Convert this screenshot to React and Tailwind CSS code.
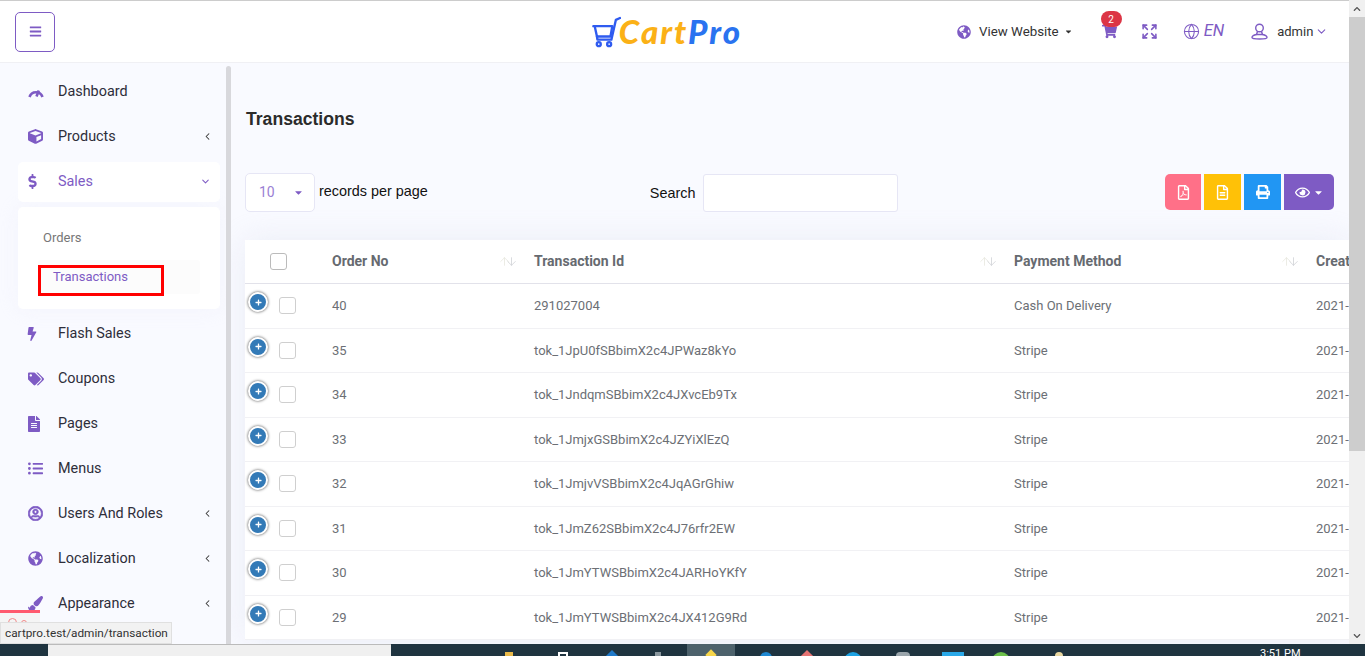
import {
  FaCube, FaDollarSign, FaBolt, FaTags, FaFileAlt, FaListUl, FaRegUserCircle,
  FaGlobeAmericas, FaPaintBrush, FaShoppingCart, FaPrint, FaRegEye, FaRegFilePdf, FaRegFileAlt,
  FaBars, FaChevronDown, FaChevronUp, FaCaretDown, FaPlus,
} from 'react-icons/fa';
import { Globe, Expand, ChevronDown, ChevronLeft, ArrowUp, ArrowDown } from 'lucide-react';

function GaugeIcon() {
  return (
    <svg width="16" height="15" viewBox="0 0 16 15" fill="none" stroke="currentColor" strokeWidth="2.6">
      <path d="M1.5 13A6.8 6.800 0 0 1 14.500 13" />
      <path d="M8.500 12.500L10.800 6.500" />
    </svg>
  );
}

const menu = [
  { label: 'Dashboard', icon: <GaugeIcon /> },
  { label: 'Products', icon: <FaCube size={15} />, arrow: true },
  { label: 'Sales', icon: <FaDollarSign size={15} className="-ml-[3px]" />, open: true },
  { label: 'Flash Sales', icon: <FaBolt size={14} className="-ml-[3px]" /> },
  { label: 'Coupons', icon: <FaTags size={16} /> },
  { label: 'Pages', icon: <FaFileAlt size={16} className="-ml-[2px]" /> },
  { label: 'Menus', icon: <FaListUl size={15} /> },
  { label: 'Users And Roles', icon: <FaRegUserCircle size={15} stroke="currentColor" strokeWidth={24} />, arrow: true },
  { label: 'Localization', icon: <FaGlobeAmericas size={15} />, arrow: true },
  { label: 'Appearance', icon: <FaPaintBrush size={15} />, arrow: true },
];

const rows = [
  ['40', '291027004', 'Cash On Delivery'],
  ['35', 'tok_1JpU0fSBbimX2c4JPWaz8kYo', 'Stripe'],
  ['34', 'tok_1JndqmSBbimX2c4JXvcEb9Tx', 'Stripe'],
  ['33', 'tok_1JmjxGSBbimX2c4JZYiXlEzQ', 'Stripe'],
  ['32', 'tok_1JmjvVSBbimX2c4JqAGrGhiw', 'Stripe'],
  ['31', 'tok_1JmZ62SBbimX2c4J76rfr2EW', 'Stripe'],
  ['30', 'tok_1JmYTWSBbimX2c4JARHoYKfY', 'Stripe'],
  ['29', 'tok_1JmYTWSBbimX2c4JX412G9Rd', 'Stripe'],
];

function CartLogo() {
  return (
    <svg width="32" height="34" viewBox="0 0 32 34" fill="none" stroke="#2f5bf0" strokeWidth="2.6" strokeLinecap="round" strokeLinejoin="round">
      <path d="M1.5 10.5h21l-2 11.5H5.5L3 10.5" />
      <path d="M5.5 22l.5 3.5h15.5L26.5 3.5 31 1.5" />
      <circle cx="7.5" cy="30.5" r="2.2" />
      <circle cx="19" cy="30.5" r="2.2" />
    </svg>
  );
}

function AdminIcon() {
  return (
    <svg width="17" height="17" viewBox="0 0 17 17" fill="none" stroke="currentColor" strokeWidth="1.4" strokeLinejoin="round" className="ml-[27px] text-[#7e5bc4]">
      <circle cx="8.5" cy="5" r="3.8" />
      <path d="M6.5 8.5L5.5 11.5h6L10.5 8.5" />
      <path d="M5.5 11.5C3 12 1 13 1 14.5c0 1 1.5 1.5 7.5 1.5s7.5-.5 7.5-1.5c0-1.500-2-2.500-4.500-3" />
    </svg>
  );
}

function SortArrows() {
  return (
    <span className="flex">
      <ArrowUp size={13} strokeWidth={1.4} className="-mr-[3px] text-[#e6e6dc]" />
      <ArrowDown size={13} strokeWidth={1.4} className="-ml-[3px] text-[#cdd0d4]" />
    </span>
  );
}

function Check({ className = '' }) {
  return <span className={`block w-[17px] h-[17px] rounded-[3px] border border-[#cfcfcf] bg-white ${className}`} />;
}

function MenuRow({ item }) {
  return (
    <div className="h-[45px] flex items-center pl-[18px] pr-[6px]">
      <div className={`flex-1 flex items-center h-[40px] rounded-[5px] pl-[10px] pr-[10px] ${item.open ? 'bg-white text-[#7e5bc4]' : 'text-[#2e2e3a]'}`}>
        <span className="w-[30px] flex text-[#7e5bc4]">{item.icon}</span>
        <span className="flex-1 text-[14.4px]">{item.label}</span>
        {item.arrow && <ChevronLeft size={11} strokeWidth={2.2} className="-mr-[3px] text-[#333]" />}
        {item.open && <ChevronDown size={11} strokeWidth={2.2} className="-mr-[1px] text-[#7e5bc4]" />}
      </div>
    </div>
  );
}

export default function App() {
  return (
    <div className="relative w-[1365px] h-[656px] overflow-hidden bg-white font-['Roboto',sans-serif]">
      <div className="flex h-[644px]">
        <div className="w-[1349px] flex flex-col bg-[#f9faff]">
          {/* Top bar */}
          <header className="h-[63px] shrink-0 flex items-center pl-[15px] bg-white border-t border-t-[#cccccc] border-b border-b-[#f0f0f4]">
            <button className="w-[40px] h-[40px] rounded-[5px] border border-[#7e5bc4] flex items-center justify-center text-[#7e5bc4]">
              <FaBars size={13} />
            </button>
            <div className="ml-[537px] w-[150px] flex items-center">
              <CartLogo />
              <span className="-ml-[2px] text-[33px] font-black italic tracking-[2px] leading-none font-['Lato',sans-serif]">
                <span className="text-[#fbb117]">Cart</span>
                <span className="text-[#2a73f0]">Pro</span>
              </span>
            </div>
            <div className="ml-[215px] flex items-center text-[#333]">
              <FaGlobeAmericas size={14} className="text-[#7e5bc4]" />
              <span className="ml-[8px] text-[13.3px]">View Website</span>
              <FaCaretDown size={9} className="ml-[5px]" />
              <span className="relative ml-[29px] text-[#7e5bc4]">
                <FaShoppingCart size={15} />
                <span className="absolute -top-[13px] -left-[1px] w-[21px] h-[16px] rounded-full bg-[#dc3545] text-white text-[10px] flex items-center justify-center">2</span>
              </span>
              <Expand size={17} strokeWidth={2.2} className="ml-[24px] text-[#7e5bc4]" />
              <Globe size={17} strokeWidth={1.5} className="ml-[25px] text-[#7e5bc4]" />
              <span className="ml-[4px] text-[16.5px] italic text-[#7e5bc4]">EN</span>
              <AdminIcon />
              <span className="ml-[9px] text-[13px]">admin</span>
              <ChevronDown size={13} className="ml-[2px] text-[#7e5bc4]" />
            </div>
          </header>

          <div className="flex-1 min-h-0 flex">
            {/* Sidebar */}
            <aside className="w-[226px] shrink-0 pt-[6px] overflow-hidden">
              {menu.map((item) => (
                <div key={item.label}>
                  <MenuRow item={item} />
                  {item.open && (
                    <div className="ml-[18px] mr-[6px] mt-[2.5px] mb-[2.5px] h-[102px] rounded-[5px] bg-white pt-[22px] px-[20px] shadow-[0_0_20px_rgba(240,240,250,0.6)]">
                      <div className="pl-[5px] text-[13px] leading-[17px] text-[#777]">Orders</div>
                      <div className="mt-[14px] h-[34px] rounded-[3px] bg-[#fcfcfc] pl-[15px] pt-[8px] text-[13px] leading-[17px] text-[#7e5bc4]">Transactions</div>
                    </div>
                  )}
                </div>
              ))}
            </aside>
            <div className="w-[5px] shrink-0 mt-[3px] rounded-t-[3px] bg-[#d8d8dc]" />

            {/* Content */}
            <main className="flex-1 min-w-0 pl-[14px] pt-[45px] overflow-hidden">
              <h1 className="pl-[1px] text-[17.6px] leading-[22px] font-bold text-[#2b2b2b] font-['Liberation_Sans',sans-serif]">Transactions</h1>

              <div className="mt-[43px] flex items-start h-[39px] pr-[15px]">
                <div className="w-[70px] h-[39px] rounded-[5px] border border-[#e6e6f5] bg-white flex items-center pl-[13px] pr-[10px] justify-between text-[14px] text-[#9a7fd4]">
                  10
                  <FaCaretDown size={11} className="text-[#7e5bc4]" />
                </div>
                <span className="ml-[4px] mt-[8px] text-[14.4px] text-[#111] font-['Liberation_Sans',sans-serif]">records per page</span>
                <span className="ml-[222px] mt-[10px] text-[14.4px] text-[#111] font-['Liberation_Sans',sans-serif]">Search</span>
                <span className="ml-[8px] mt-[1px] w-[195px] h-[38px] rounded-[3px] border border-[#e6e6f5] bg-white" />
                <div className="ml-auto mt-[1px] flex gap-[3px] text-white">
                  <span className="w-[36px] h-[36px] rounded-l-[5px] bg-[#ff7088] flex items-center justify-center"><FaRegFilePdf size={15} /></span>
                  <span className="w-[37px] h-[36px] bg-[#ffc107] flex items-center justify-center"><FaRegFileAlt size={15} /></span>
                  <span className="w-[37px] h-[36px] bg-[#2196f3] flex items-center justify-center"><FaPrint size={14} /></span>
                  <span className="w-[50px] h-[36px] rounded-r-[5px] bg-[#7e5bc4] flex items-center justify-center gap-[3px]"><FaRegEye size={15} /><FaCaretDown size={11} /></span>
                </div>
              </div>

              <div className="mt-[28px] bg-white shadow-[0_0_30px_rgba(225,228,240,0.6)] overflow-hidden">
                <table className="table-fixed w-[1200px] border-collapse text-[13px] text-[#6c6f75]">
                  <colgroup>
                    <col className="w-[87px]" />
                    <col className="w-[202px]" />
                    <col className="w-[480px]" />
                    <col className="w-[302px]" />
                    <col className="w-[129px]" />
                  </colgroup>
                  <thead>
                    <tr className="h-[43.5px] border-b border-[#e2e2ea] text-left text-[14px] text-[#666a70]">
                      <th className="pl-[25px] font-bold"><Check className="!border-[#bbb]" /></th>
                      <th className="font-bold">
                        <div className="flex items-center justify-between pr-[16px]">Order No<SortArrows /></div>
                      </th>
                      <th className="font-bold">
                        <div className="flex items-center justify-between pr-[16px]">Transaction Id<SortArrows /></div>
                      </th>
                      <th className="font-bold">
                        <div className="flex items-center justify-between pr-[16px]">Payment Method<SortArrows /></div>
                      </th>
                      <th className="font-bold">Created At</th>
                    </tr>
                  </thead>
                  <tbody>
                    {rows.map((r) => (
                      <tr key={r[0]} className="h-[44.5px] border-b border-[#f1f1f4]">
                        <td>
                          <div className="flex items-center pl-[3px]">
                            <span className="w-[20px] h-[20px] -mt-[7px] rounded-full bg-[#337ab7] border-2 border-white shadow-[0_0_3px_#444] flex items-center justify-center text-white">
                              <FaPlus size={7} />
                            </span>
                            <Check className="ml-[11px]" />
                          </div>
                        </td>
                        <td>{r[0]}</td>
                        <td>{r[1]}</td>
                        <td>{r[2]}</td>
                        <td>2021-10-12</td>
                      </tr>
                    ))}
                  </tbody>
                </table>
              </div>
            </main>
          </div>
        </div>

        {/* Browser scrollbar */}
        <div className="w-[16px] shrink-0 bg-[#f0f0f0] flex flex-col">
          <div className="h-[17px] flex items-center justify-center text-[#555]"><FaChevronUp size={8} /></div>
          <div className="h-[434px] bg-[#cdcdcd]" />
          <div className="mt-auto h-[17px] flex items-center justify-center text-[#555]"><FaChevronDown size={8} /></div>
        </div>
      </div>

      {/* Windows taskbar, cut off by the window */}
      <div className="h-[12px] flex bg-[#1f3440] overflow-hidden">
        <div className="ml-[48px] w-[343px] bg-[#f0f0f0] border-t border-[#bbb]" />
        <div className="ml-[114px] pt-[8px] flex w-[182px]">
          <span className="w-[8px] h-[8px] bg-[#e9b949]" />
          <span className="ml-[45px] w-[10px] h-[10px] border-2 border-white" />
          <span className="ml-[39px] w-[10px] h-[10px] rotate-45 bg-[#1e78c8]" />
          <span className="ml-[38px] w-[6px] h-[8px] bg-[#8a979e]" />
        </div>
        <div className="w-[48px] bg-[#4d626c] flex justify-center pt-[7px]">
          <span className="w-[8px] h-[8px] rotate-45 bg-[#f7d64a]" />
        </div>
        <div className="ml-[25px] pt-[8px] flex">
          <span className="w-[12px] h-[12px] rounded-full bg-[#1e88d2]" />
          <span className="ml-[30px] w-[10px] h-[10px] rotate-45 bg-[#e57373]" />
          <span className="ml-[32px] w-[18px] h-[18px] rounded-full bg-[#1ba1e2]" />
          <span className="ml-[34px] w-[14px] h-[14px] rounded-sm bg-[#9aa5ab]" />
          <span className="ml-[32px] w-[22px] h-[14px] bg-[#29a8e8]" />
          <span className="ml-[28px] w-[18px] h-[18px] rounded-full bg-[#6cc04a]" />
          <span className="ml-[45px] w-[8px] h-[8px] rounded-full bg-[#e9d7a0]" />
        </div>
        <span className="absolute left-[1260px] top-[648px] text-[11px] leading-none text-white">3:51 PM</span>
      </div>

      {/* Overlays: annotation box and browser status tooltip */}
      <div className="absolute left-[38px] top-[265px] w-[126px] h-[31px] border-[3px] border-[#ff0000]" />
      <div className="absolute left-0 top-[610px] w-[40px] h-[12px] bg-[#f5f5f5] border-t-[3px] border-[#ff5a6e] flex gap-[4px] pl-[8px] pt-[5px]">
        <span className="w-[9px] h-[9px] rounded-full border border-[#f08a8a]" />
        <span className="w-[6px] h-[6px] mt-[2px] rounded-full border border-[#f08a8a]" />
      </div>
      <div className="absolute left-0 top-[622px] h-[22px] w-[172px] bg-[#f2f2f2] border border-[#e0e0e0] pl-[4px] text-[11.8px] leading-[20px] text-[#333]">cartpro.test/admin/transaction</div>
    </div>
  );
}
